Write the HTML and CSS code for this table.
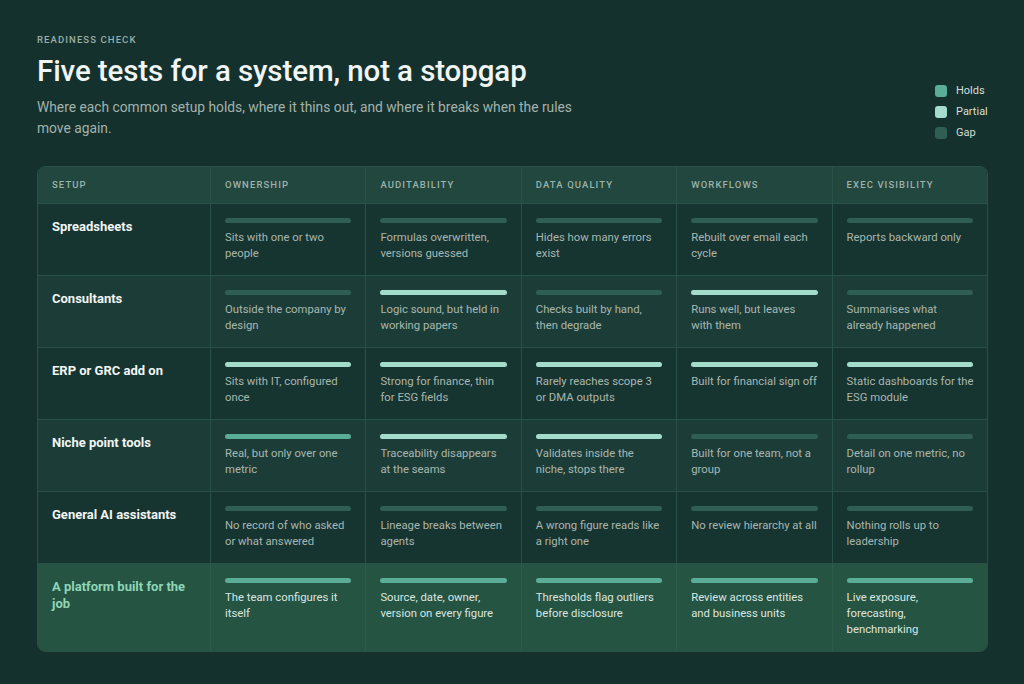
FILE: index.html
```html
<!DOCTYPE html>
<html lang="en">
<head>
<meta charset="utf-8">
<title>Readiness check</title>
<link rel="stylesheet" href="styles.css">
</head>
<body>
<main class="page">
  <header class="intro">
    <div class="intro-text">
      <p class="eyebrow">READINESS CHECK</p>
      <h1 class="title">Five tests for a system, not a stopgap</h1>
      <p class="lede">Where each common setup holds, where it thins out, and where it breaks when the rules move again.</p>
    </div>
    <ul class="legend">
      <li class="legend-item"><span class="swatch holds"></span>Holds</li>
      <li class="legend-item"><span class="swatch partial"></span>Partial</li>
      <li class="legend-item"><span class="swatch gap"></span>Gap</li>
    </ul>
  </header>

  <section class="matrix">
    <div class="row head">
      <div class="cell hcell">SETUP</div>
      <div class="cell hcell">OWNERSHIP</div>
      <div class="cell hcell">AUDITABILITY</div>
      <div class="cell hcell">DATA QUALITY</div>
      <div class="cell hcell">WORKFLOWS</div>
      <div class="cell hcell">EXEC VISIBILITY</div>
    </div>

    <div class="row odd">
      <div class="cell label">Spreadsheets</div>
      <div class="cell"><span class="bar gap"></span><p class="note">Sits with one or two people</p></div>
      <div class="cell"><span class="bar gap"></span><p class="note">Formulas overwritten, versions guessed</p></div>
      <div class="cell"><span class="bar gap"></span><p class="note">Hides how many errors exist</p></div>
      <div class="cell"><span class="bar gap"></span><p class="note">Rebuilt over email each cycle</p></div>
      <div class="cell"><span class="bar gap"></span><p class="note">Reports backward only</p></div>
    </div>

    <div class="row even">
      <div class="cell label">Consultants</div>
      <div class="cell"><span class="bar gap"></span><p class="note">Outside the company by design</p></div>
      <div class="cell"><span class="bar partial"></span><p class="note">Logic sound, but held in working papers</p></div>
      <div class="cell"><span class="bar gap"></span><p class="note">Checks built by hand, then degrade</p></div>
      <div class="cell"><span class="bar partial"></span><p class="note">Runs well, but leaves with them</p></div>
      <div class="cell"><span class="bar gap"></span><p class="note">Summarises what already happened</p></div>
    </div>

    <div class="row odd">
      <div class="cell label">ERP or GRC add on</div>
      <div class="cell"><span class="bar partial"></span><p class="note">Sits with IT, configured once</p></div>
      <div class="cell"><span class="bar partial"></span><p class="note">Strong for finance, thin for ESG fields</p></div>
      <div class="cell"><span class="bar partial"></span><p class="note">Rarely reaches scope 3 or DMA outputs</p></div>
      <div class="cell"><span class="bar partial"></span><p class="note">Built for financial sign off</p></div>
      <div class="cell"><span class="bar partial"></span><p class="note">Static dashboards for the ESG module</p></div>
    </div>

    <div class="row even">
      <div class="cell label">Niche point tools</div>
      <div class="cell"><span class="bar holds"></span><p class="note">Real, but only over one metric</p></div>
      <div class="cell"><span class="bar partial"></span><p class="note">Traceability disappears at the seams</p></div>
      <div class="cell"><span class="bar partial"></span><p class="note">Validates inside the niche, stops there</p></div>
      <div class="cell"><span class="bar gap"></span><p class="note">Built for one team, not a group</p></div>
      <div class="cell"><span class="bar gap"></span><p class="note">Detail on one metric, no rollup</p></div>
    </div>

    <div class="row odd">
      <div class="cell label">General AI assistants</div>
      <div class="cell"><span class="bar gap"></span><p class="note">No record of who asked or what answered</p></div>
      <div class="cell"><span class="bar gap"></span><p class="note">Lineage breaks between agents</p></div>
      <div class="cell"><span class="bar gap"></span><p class="note">A wrong figure reads like a right one</p></div>
      <div class="cell"><span class="bar gap"></span><p class="note">No review hierarchy at all</p></div>
      <div class="cell"><span class="bar gap"></span><p class="note">Nothing rolls up to leadership</p></div>
    </div>

    <div class="row best">
      <div class="cell label">A platform built for the job</div>
      <div class="cell"><span class="bar holds"></span><p class="note">The team configures it itself</p></div>
      <div class="cell"><span class="bar holds"></span><p class="note">Source, date, owner, version on every figure</p></div>
      <div class="cell"><span class="bar holds"></span><p class="note">Thresholds flag outliers before disclosure</p></div>
      <div class="cell"><span class="bar holds"></span><p class="note">Review across entities and business units</p></div>
      <div class="cell"><span class="bar holds"></span><p class="note">Live exposure, forecasting, benchmarking</p></div>
    </div>
  </section>
</main>
</body>
</html>
```

FILE: styles.css
```css
* { box-sizing: border-box; }

html, body {
  margin: 0;
  padding: 0;
  background: #14312d;
}

body {
  font-family: Roboto, "Liberation Sans", Arial, sans-serif;
  color: #e8efec;
}

.page {
  padding: 34px 36px 0 37px;
}

.intro {
  display: flex;
  justify-content: space-between;
  align-items: flex-start;
}

.eyebrow {
  margin: 0;
  font-size: 9.5px;
  font-weight: 500;
  letter-spacing: 1.1px;
  color: #9aaea7;
  line-height: 12px;
}

.title {
  margin: 7px 0 0;
  font-size: 29.5px;
  font-weight: 500;
  line-height: 37px;
  color: #f1f5f3;
  letter-spacing: -0.1px;
}

.lede {
  margin: 7px 0 0;
  width: 560px;
  font-size: 13.8px;
  line-height: 21px;
  color: #a3b2ac;
}

.legend {
  list-style: none;
  margin: 51px 0 0;
  padding: 0;
  width: 53px;
  display: flex;
  flex-direction: column;
  gap: 9px;
}

.legend-item {
  display: flex;
  align-items: center;
  gap: 9px;
  font-size: 11px;
  line-height: 12px;
  color: #d5dfdb;
}

.swatch {
  width: 12px;
  height: 12px;
  border-radius: 3px;
  flex: none;
}

.holds { background: #5aae98; }
.partial { background: #a3dccb; }
.gap { background: #2f5e52; }

.matrix {
  margin-top: 27px;
  border: 1px solid #2a5148;
  border-radius: 8px;
  overflow: hidden;
}

.row {
  display: grid;
  grid-template-columns: 172px repeat(5, 1fr);
  border-top: 1px solid #2a5148;
}

.row.head {
  border-top: none;
  background: #21473f;
}

.row.odd { background: #163430; }
.row.even { background: #1c3d37; }
.row.best { background: #255442; }

.cell {
  padding: 14px 13.5px 13px 14px;
  border-left: 1px solid #2a5148;
}

.row .cell:first-child {
  border-left: none;
}

.row.best .cell { border-left-color: #2d5c4a; }

.hcell {
  padding: 12px 14px 13px;
  font-size: 9.5px;
  font-weight: 500;
  letter-spacing: 1.1px;
  line-height: 11px;
  color: #9db2aa;
}

.label {
  padding-right: 14px;
  font-size: 13px;
  font-weight: 700;
  line-height: 17px;
  color: #f2f6f4;
}

.row.best .label { color: #8fd5b8; }

.bar {
  display: block;
  height: 5px;
  margin-right: 0.5px;
  border-radius: 3px;
}

.note {
  margin: 7px 0 0;
  font-size: 11.3px;
  line-height: 16px;
  color: #a9b7b1;
}

.row.best .note { color: #dbe6e1; }
```
